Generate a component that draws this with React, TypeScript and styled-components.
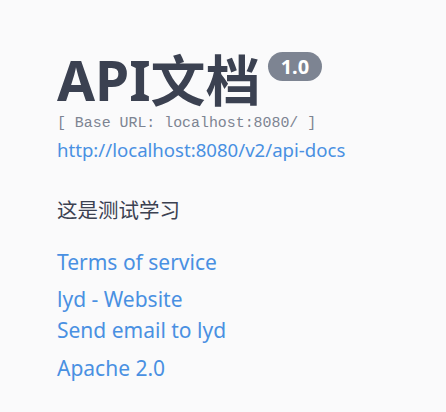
import React from "react";
import styled, { createGlobalStyle } from "styled-components";

const Global = createGlobalStyle`
  html, body { margin: 0; padding: 0; background: #fafafb; }
  body { font-family: "Noto Sans", "Noto Sans CJK SC", sans-serif; }
`;

const Page = styled.div`
  width: 446px;
  height: 412px;
  box-sizing: border-box;
  padding: 51px 0 0 57px;
  background: #fafafb;
  overflow: hidden;
`;

const HGroup = styled.hgroup`
  display: flex;
  flex-direction: column;
  margin: 0;
`;

const Title = styled.h2`
  display: flex;
  align-items: flex-start;
  margin: 0;
  font-family: "Noto Sans", "Noto Sans CJK SC", sans-serif;
  font-size: 55px;
  line-height: 58px;
  font-weight: 700;
  color: #3b4151;
`;

const Version = styled.span`
  display: inline-flex;
  align-items: center;
  justify-content: center;
  margin: 1px 0 0 7px;
  padding: 0 13px;
  height: 29px;
  border-radius: 15px;
  background: #7d8492;
  color: #fff;
  font-size: 20px;
  font-weight: 700;
  line-height: 29px;
`;

const BaseUrl = styled.pre`
  margin: 5px 0 0;
  font-family: "Liberation Mono", monospace;
  font-size: 14.9px;
  line-height: 18px;
  color: #7d8492;
  font-weight: 300;
`;

const Link = styled.a<{ $size?: number; $lh?: number }>`
  display: block;
  color: #4990e2;
  text-decoration: none;
  font-size: ${(p) => p.$size ?? 21}px;
  line-height: ${(p) => p.$lh ?? 28}px;
  cursor: pointer;
`;

const Block = styled.div<{ $mt: number }>`
  margin-top: ${(p) => p.$mt}px;
`;

const Description = styled.p`
  margin: 36px 0 0;
  font-size: 20.5px;
  line-height: 26px;
  color: #3b4151;
`;

export default function App() {
  return (
    <>
      <Global />
      <Page>
        <HGroup>
          <Title>
            API文档
            <Version>1.0</Version>
          </Title>
          <BaseUrl>[ Base URL: localhost:8080/ ]</BaseUrl>
          <Block $mt={7}>
            <Link $size={18.6} $lh={22}>http://localhost:8080/v2/api-docs</Link>
          </Block>
        </HGroup>
        <Description>这是测试学习</Description>
        <Block $mt={25}>
          <Link>Terms of service</Link>
        </Block>
        <Block $mt={8}>
          <Link $lh={31}>lyd - Website</Link>
          <Link $lh={31}>Send email to lyd</Link>
        </Block>
        <Block $mt={8}>
          <Link>Apache 2.0</Link>
        </Block>
      </Page>
    </>
  );
}
